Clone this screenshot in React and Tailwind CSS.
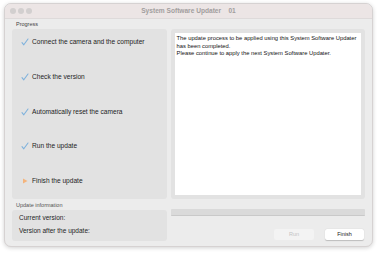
const steps = [
  { label: 'Connect the camera and the computer', done: true },
  { label: 'Check the version', done: true },
  { label: 'Automatically reset the camera', done: true },
  { label: 'Run the update', done: true },
  { label: 'Finish the update', done: false },
];

const Check = () => (
  <svg width="8" height="8" viewBox="0 0 8 8" className="shrink-0">
    <path d="M1 4.6 L2.8 6.8 L7 1" fill="none" stroke="#7fb2dc" strokeWidth="1.1" strokeLinecap="round" strokeLinejoin="round" />
  </svg>
);

const Arrow = () => (
  <svg width="8" height="8" viewBox="0 0 8 8" className="shrink-0">
    <path d="M2 1.5 L6.5 4 L2 6.5 Z" fill="#f4b47c" />
  </svg>
);

export default function App() {
  return (
    <div className="w-[378px] h-[254px] bg-white" style={{ fontFamily: '"Liberation Sans", Arial, sans-serif' }}>
      <div className="ml-[4px] pt-[3px]">
        <div className="w-[369px] h-[244px] rounded-[7px] border border-[#d6d2d2] bg-[#ececec] shadow-[0_1px_4px_rgba(0,0,0,0.18)] overflow-hidden flex flex-col">
          {/* Title bar */}
          <div className="h-[15px] bg-[#ece5e5] border-b border-[#dedada] relative flex items-center justify-center">
            <div className="absolute left-[5px] top-[4px] flex gap-[2px]">
              <div className="w-[6px] h-[6px] rounded-full bg-[#d2cfcf]" />
              <div className="w-[6px] h-[6px] rounded-full bg-[#d2cfcf]" />
              <div className="w-[6px] h-[6px] rounded-full bg-[#d2cfcf]" />
            </div>
            <span className="text-[6.6px] text-[#a29e9e] font-bold whitespace-pre">System Software Updater    01</span>
          </div>

          <div className="px-[7px]">
            <div className="text-[5.5px] text-[#444] pl-[4px] h-[10px] pt-[2px] leading-[7px]">Progress</div>
            <div className="flex gap-[4px] h-[170px]">
              <div className="w-[155px] bg-[#e2e2e2] rounded-[3px] flex flex-col pl-[9px] pt-[9px] gap-[26.8px]">
                {steps.map(s => (
                  <div key={s.label} className="flex items-center gap-[3px] h-[8px]">
                    {s.done ? <Check /> : <Arrow />}
                    <span className="text-[6.6px] text-[#1d1d1d] leading-[8px]">{s.label}</span>
                  </div>
                ))}
              </div>
              <div className="w-[195px] bg-[#e2e2e2] rounded-[3px] p-[4px]">
                <div className="bg-white h-full px-[2px] pt-[2px] text-[5.8px] leading-[7.5px] text-[#111]">
                  The update process to be applied using this System Software Updater<br />
                  has been completed.<br />
                  Please continue to apply the next System Software Updater.
                </div>
              </div>
            </div>

            <div className="flex gap-[4px]">
              <div className="w-[155px]">
                <div className="text-[5.5px] text-[#555] pl-[4px] h-[11px] pt-[3px] leading-[7px]">Update information</div>
                <div className="bg-[#e2e2e2] rounded-[3px] h-[31px] pl-[7px] pt-[4px] flex flex-col gap-[5px] text-[6.5px] leading-[8px] text-[#1d1d1d]">
                  <span>Current version:</span>
                  <span>Version after the update:</span>
                </div>
              </div>
              <div className="w-[195px] flex flex-col">
                <div className="mt-[10px] h-[7px] bg-[#dadada] border-b border-[#c9c9c9] rounded-[1px]" />
                <div className="flex justify-end gap-[11px] mt-[13px] pr-[1px]">
                  <div className="w-[40px] h-[11px] rounded-[2px] bg-[#f3f3f3] text-[5.5px] text-[#c4c4c4] flex items-center justify-center">Run</div>
                  <div className="w-[39px] h-[11px] rounded-[2px] bg-white shadow-[0_0.5px_1px_rgba(0,0,0,0.2)] text-[5.5px] text-[#222] flex items-center justify-center">Finish</div>
                </div>
              </div>
            </div>
          </div>
        </div>
      </div>
    </div>
  );
}
